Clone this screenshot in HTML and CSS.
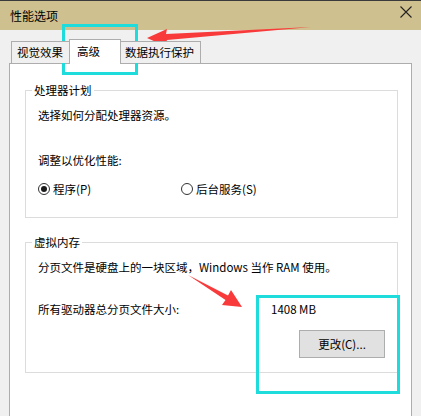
FILE: index.html
```html
<!DOCTYPE html>
<html lang="zh-CN">
<head>
<meta charset="utf-8">
<title>性能选项</title>
<link rel="stylesheet" href="styles.css">
</head>
<body>
<div class="titlebar">
  <span class="title">性能选项</span>
  <svg class="close" width="12" height="12" viewBox="0 0 12 12"><path d="M0.5 0.5 L11.5 11.5 M11.5 0.5 L0.5 11.5" stroke="#222" stroke-width="1.1" fill="none"/></svg>
</div>
<div class="main">
  <div class="tabs">
    <div class="tab tab-visual">视觉效果</div>
    <div class="tab tab-adv selected">高级</div>
    <div class="tab tab-dep">数据执行保护</div>
  </div>
  <div class="panel">
    <fieldset class="group group-cpu">
      <legend>处理器计划</legend>
      <div class="line">选择如何分配处理器资源。</div>
      <div class="line label-opt">调整以优化性能:</div>
      <div class="radios">
        <label class="radio radio-first"><span class="circle on"></span><span>程序(P)</span></label>
        <label class="radio"><span class="circle"></span><span>后台服务(S)</span></label>
      </div>
    </fieldset>
    <fieldset class="group group-mem">
      <legend>虚拟内存</legend>
      <div class="line">分页文件是硬盘上的一块区域，Windows 当作 RAM 使用。</div>
      <div class="line size-row"><span class="size-label">所有驱动器总分页文件大小:</span><span>1408 MB</span></div>
      <div class="btn-row"><button class="btn">更改(C)...</button></div>
    </fieldset>
  </div>
</div>
<svg class="annot" width="421" height="416" viewBox="0 0 421 416">
  <rect x="63.5" y="25.5" width="73" height="48" fill="none" stroke="#1edcdc" stroke-width="3"/>
  <rect x="257.5" y="296.5" width="141" height="96" fill="none" stroke="#1edcdc" stroke-width="3"/>
  <polygon points="147,38 167,29 166,34 311,27 167,40 165,46" fill="#f83a3a"/>
  <polygon points="188,275 228,295.5 231,290 242,307 222,305 225.5,300" fill="#f83a3a"/>
</svg>
</body>
</html>
```

FILE: styles.css
```css
html, body {
  margin: 0;
  height: 416px;
  overflow: hidden;
}
body {
  position: relative;
  display: flex;
  flex-direction: column;
  background: #f0f0f0;
  color: #000;
  font-family: "Noto Sans CJK SC", "Microsoft YaHei", sans-serif;
  font-size: 11.5px;
}
.titlebar {
  flex: none;
  height: 29px;
  border-top: 1px solid #3a3a3a;
  background: #cfc08f;
  display: flex;
  align-items: center;
  justify-content: space-between;
  padding: 0 9px 0 10px;
  font-size: 12px;
}
.title {
  line-height: 16px;
}
.close {
  display: block;
  margin-top: -8px;
}
.main {
  flex: 1;
  min-height: 0;
  display: flex;
  flex-direction: column;
  padding: 9px 9px 0 9px;
}
.tabs {
  flex: none;
  display: flex;
  align-items: flex-end;
  height: 24px;
  padding-left: 2px;
  position: relative;
  z-index: 1;
}
.tab {
  box-sizing: border-box;
  height: 22px;
  border: 1px solid #adadad;
  border-bottom: none;
  background: #f0f0f0;
  padding: 2px 0 0 5px;
  line-height: 16px;
  white-space: nowrap;
  overflow: hidden;
}
.tab-visual { width: 60px; }
.tab-adv { width: 48px; }
.tab-dep { width: 82px; }
.tab.selected {
  position: relative;
  z-index: 2;
  width: 52px;
  height: 25px;
  margin: 0 -2px -1px -2px;
  padding: 3px 0 0 7px;
  background: #fff;
}
.panel {
  flex: 1;
  min-height: 0;
  background: #fff;
  border: 1px solid #adadad;
  border-bottom: none;
  padding: 0 13px 0 15px;
}
.group {
  margin: 18px 0 0 0;
  padding: 9px 12px 20px 12px;
  border: 1px solid #dcdcdc;
  min-width: 0;
}
.group-mem {
  margin-top: 16px;
  padding-bottom: 14px;
}
.group legend {
  padding: 0 2px;
  margin-left: -6px;
  line-height: 16px;
}
.line {
  line-height: 16px;
  white-space: nowrap;
}
.label-opt {
  margin-top: 29px;
}
.radios {
  display: flex;
  align-items: center;
  height: 16px;
  margin-top: 13px;
}
.radio {
  display: flex;
  align-items: center;
  gap: 3px;
  line-height: 16px;
}
.radio-first {
  width: 143px;
}
.circle {
  box-sizing: border-box;
  width: 12px;
  height: 12px;
  border: 1px solid #333;
  border-radius: 50%;
  background: #fff;
  display: flex;
  align-items: center;
  justify-content: center;
}
.circle.on::after {
  content: "";
  width: 6px;
  height: 6px;
  border-radius: 50%;
  background: #1a1a1a;
}
.size-row {
  display: flex;
  margin-top: 26px;
}
.size-label {
  width: 233px;
}
.btn-row {
  display: flex;
  justify-content: flex-end;
  margin-top: 13px;
}
.btn {
  box-sizing: border-box;
  width: 86px;
  height: 28px;
  border: 1px solid #adadad;
  background: #e1e1e1;
  font-family: inherit;
  font-size: 11.5px;
  color: #000;
  padding: 0;
  margin: 0;
}
.annot {
  position: absolute;
  top: 0;
  left: 0;
  pointer-events: none;
}
```
